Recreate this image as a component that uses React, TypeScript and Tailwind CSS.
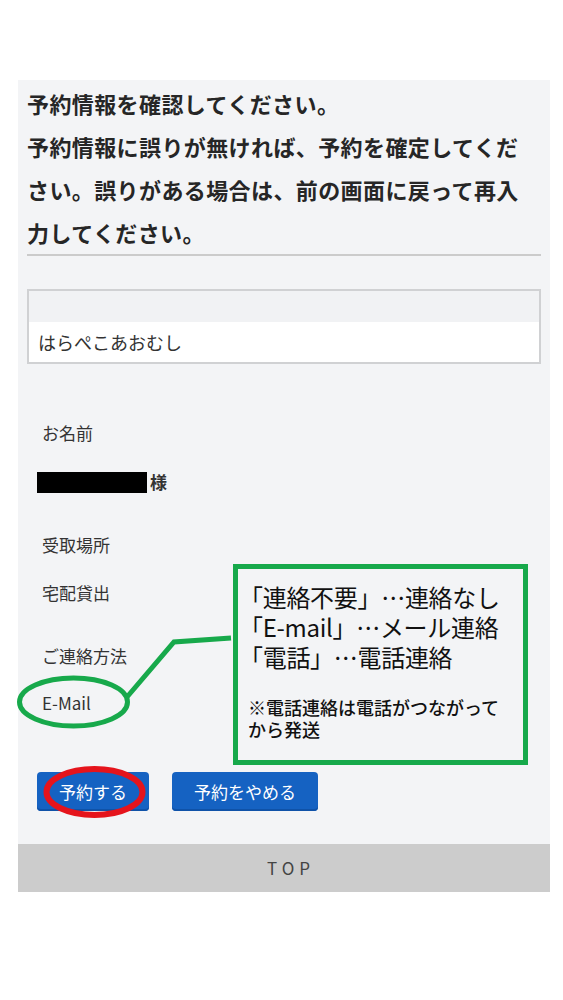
import React from "react";

export default function App() {
  return (
    <div className="relative min-h-[1000px] w-[563px] bg-white pt-[80px] font-['Noto_Sans_CJK_JP','Noto_Sans',sans-serif]">
      <div className="ml-[18px] w-[532px]">
        <div className="bg-[#f3f4f6] px-[9px] pt-[2px] pb-[33px]">
          <p className="text-[22px] font-bold leading-[43px] tracking-[0.4px] text-[#262626]">
            予約情報を確認してください。
            <br />
            予約情報に誤りが無ければ、予約を確定してくだ
            <br />
            さい。誤りがある場合は、前の画面に戻って再入
            <br />
            力してください。
          </p>
          <div className="h-[2px] bg-[#cbcbcb]" />
          <div className="mt-[33px] border-2 border-[#d0d1d3]">
            <div className="h-[31px] bg-[#f1f2f4]" />
            <div className="h-[40px] bg-white pl-[9px] text-[18px] leading-[40px] text-[#333]">
              はらぺこあおむし
            </div>
          </div>
          <div className="mt-[57px] pl-[15px] text-[17px] leading-[24px] text-[#333]">お名前</div>
          <div className="mt-[25px] flex h-[24px] items-center gap-[3px] pl-[10px]">
            <div className="h-[21px] w-[110px] bg-black" />
            <span className="text-[17px] font-bold leading-[24px] text-[#333]">様</span>
          </div>
          <div className="mt-[39px] pl-[15px] text-[17px] leading-[24px] text-[#333]">受取場所</div>
          <div className="mt-[24px] pl-[15px] text-[17px] leading-[24px] text-[#333]">宅配貸出</div>
          <div className="mt-[39px] pl-[15px] text-[17px] leading-[24px] text-[#333]">ご連絡方法</div>
          <div className="mt-[23px] pl-[15px] text-[17px] leading-[24px] text-[#333]">E-Mail</div>
          <div className="mt-[57px] flex gap-[23px] pl-[10px]">
            <button className="h-[39px] rounded-[4px] bg-[#1562c2] px-[22px] text-[17px] leading-[39px] text-white shadow-[inset_0_-2px_0_#0f52a8]">
              予約する
            </button>
            <button className="h-[39px] rounded-[4px] bg-[#1562c2] px-[22px] text-[17px] leading-[39px] text-white shadow-[inset_0_-2px_0_#0f52a8]">
              予約をやめる
            </button>
          </div>
        </div>
        <div className="flex h-[48px] items-center justify-center bg-[#cccccc] pl-[14px] text-[17px] tracking-[5px] text-[#444]">
          TOP
        </div>
      </div>

      <div className="absolute left-[233px] top-[564px] h-[201px] w-[295px] border-[5px] border-[#17a94b] bg-[#f3f4f6] pl-[1px] pt-[13px] text-[#111]">
        <div className="text-[24px] leading-[30px] tracking-[-0.3px]">
          <div>「連絡不要」…連絡なし</div>
          <div>「E-mail」…メール連絡</div>
          <div>「電話」…電話連絡</div>
        </div>
        <div className="mt-[24px] pl-[9px] text-[18px] font-medium leading-[22px]">
          <div>※電話連絡は電話がつながって</div>
          <div>から発送</div>
        </div>
      </div>

      <svg
        className="pointer-events-none absolute left-0 top-0"
        width="563"
        height="1000"
        viewBox="0 0 563 1000"
      >
        <ellipse cx="73.5" cy="702" rx="54" ry="24" fill="none" stroke="#17a94b" strokeWidth="5" />
        <polyline points="127,697 174,642 231,638" fill="none" stroke="#17a94b" strokeWidth="5" />
        <ellipse cx="94.5" cy="792" rx="48" ry="23" fill="none" stroke="#e5141c" strokeWidth="6" />
      </svg>
    </div>
  );
}
